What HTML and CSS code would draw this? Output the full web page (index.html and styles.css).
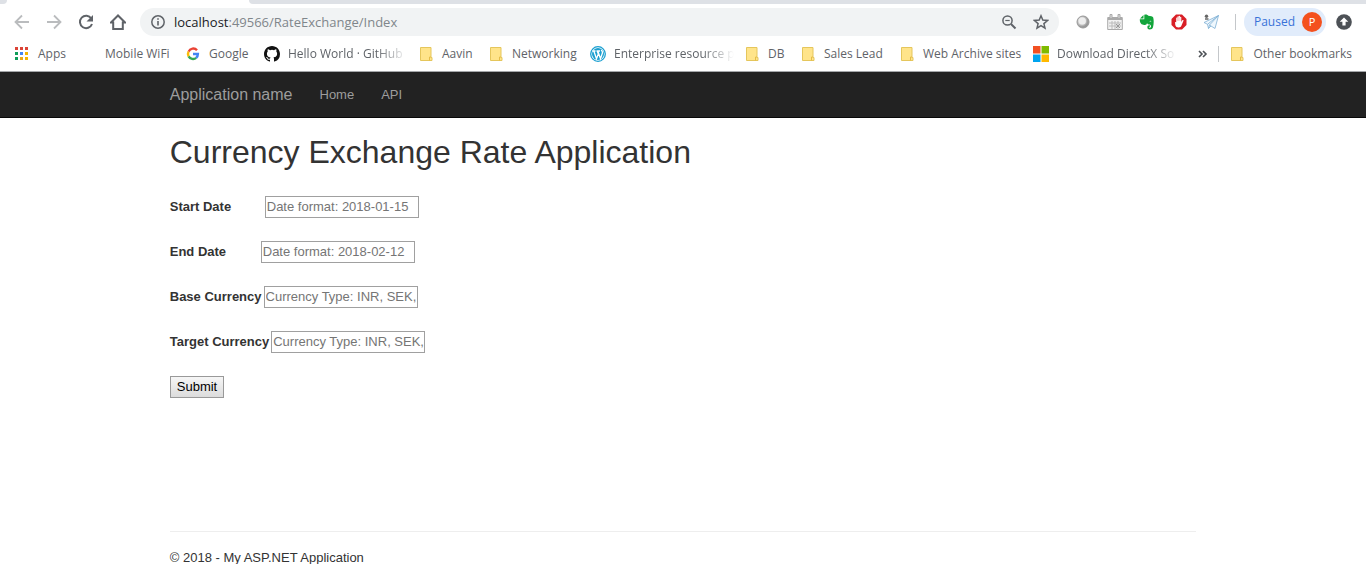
FILE: index.html
```
<!DOCTYPE html>
<html lang="en">
<head>
<meta charset="utf-8">
<title>Currency Exchange Rate Application</title>
<link rel="stylesheet" href="styles.css">
</head>
<body>
<svg class="defs" aria-hidden="true">
  <symbol id="folder" viewBox="0 0 16 16"><path d="M2.500 1.500h10.500v10h1v3H2.500z" fill="#ffe48a" stroke="#e5c65c"/><path d="M11.500 14.500v-3.500h1.500" fill="none" stroke="#e5bd48"/></symbol>
</svg>
<div class="browser">
  <div class="tabs"><div class="tab-edge"></div><div class="tab"></div><div class="tab-rest"></div></div>
  <div class="toolbar">
    <button class="tool" aria-label="Back"><svg viewBox="0 0 16 16"><path d="M15 8H2M8 1.500L1.500 8 8 14.500" fill="none" stroke="#babcbe" stroke-width="1.800"/></svg></button>
    <button class="tool" aria-label="Forward"><svg viewBox="0 0 16 16"><path d="M1 8h13M8 1.500L14.500 8 8 14.500" fill="none" stroke="#babcbe" stroke-width="1.800"/></svg></button>
    <button class="tool" aria-label="Reload"><svg viewBox="0 0 16 16"><path d="M13.300 4.500A6.200 6.200 0 1 0 14 10" fill="none" stroke="#5f6368" stroke-width="2"/><path d="M15 1v6.500H8.500z" fill="#5f6368"/></svg></button>
    <button class="tool" aria-label="Home page"><svg viewBox="0 0 16 16"><path d="M1 8.500L8 1.500l7 7h-2.200V15H3.200V8.500z" fill="none" stroke="#5f6368" stroke-width="2"/></svg></button>
    <div class="address">
      <svg viewBox="0 0 16 16" class="icon"><circle cx="8" cy="8" r="6.200" fill="none" stroke="#5f6368" stroke-width="1.500"/><path d="M8 7v4.500M8 4.200v1.600" stroke="#5f6368" stroke-width="1.600"/></svg>
      <span class="url"><span class="host">localhost</span>:49566/RateExchange/Index</span>
      <button class="addr-button" aria-label="Zoom"><svg viewBox="0 0 16 16" class="icon"><circle cx="6.500" cy="6.500" r="4.600" fill="none" stroke="#5f6368" stroke-width="1.500"/><path d="M10 10l4.500 4.500" stroke="#5f6368" stroke-width="2"/><path d="M4.300 6.500h4.400" stroke="#5f6368" stroke-width="1.200"/></svg></button>
      <button class="addr-button" aria-label="Bookmark"><svg viewBox="0 0 16 16" class="icon"><path d="M8 1.800l1.800 4.300 4.700.4-3.600 3.100 1.100 4.600L8 11.700l-4 2.500 1.100-4.600-3.600-3.100 4.700-.4z" fill="none" stroke="#5f6368" stroke-width="1.500"/></svg></button>
    </div>
    <div class="extensions">
      <svg viewBox="0 0 16 16" class="icon"><defs><radialGradient id="orb" cx=".4" cy=".4"><stop offset="0" stop-color="#fff"/><stop offset=".5" stop-color="#ddd"/><stop offset="1" stop-color="#999"/></radialGradient></defs><circle cx="8" cy="8" r="6" fill="url(#orb)" stroke="#999"/><circle cx="7.300" cy="7" r="3.600" fill="#eee"/></svg>
      <svg viewBox="0 0 16 16" class="icon"><path d="M.7 3.500h14.600v12H.7z" fill="#f1f1f1" stroke="#aaa"/><path d="M1 5h14" stroke="#aaa" stroke-width="2"/><path d="M3 .5h2v4H3zM11 .5h2v4h-2z" fill="#ddd" stroke="#aaa"/><path d="M2 9h12M2 12h12M5 7v8M8 7v8M11 7v8" stroke="#bbb"/><path d="M9 10l4 4M13 10l-4 4" stroke="#999"/></svg>
      <svg viewBox="0 0 16 16" class="icon"><path d="M1 4.500L4.500 1v3.500zM5.300.7c2-.8 3.400.1 4 1 2.200.1 4.500.4 4.900 1.800.8 3 .6 7-.2 9.800-.5 1.700-1.500 2.200-3.300 2.200-1.600 0-2.300-1-2.300-2.300 0-1.400.7-2.200 2.600-1.800v1.400c-.7-.1-1.100 0-1.100.5 0 .6 1.700.5 2 0 .3-.7 0-2.100-.8-2.500-1-.4-2-.2-2.500-.7l-.6-1c-.3 2-1.500 2.100-3.700 1.700C1.500 10.300.7 8 .8 5.300h4.500z" fill="#12a53b"/><path d="M10.500 7.500c.2-1 1.600-1 1.900.3-.6-.4-1.200-.5-1.900-.3" fill="#fff"/></svg>
      <svg viewBox="0 0 16 16" class="icon"><path d="M5 .5h6L15.500 5v6L11 15.500H5L.5 11V5z" fill="#d91f26"/><path d="M4 8l1.200.3V4.200c0-1 1.200-1 1.200 0V3c0-1 1.300-1 1.300 0v-.6c0-.9 1.300-.9 1.300 0v1c0-1 1.300-.9 1.300 0V8l1-1.700c.6-.8 1.500-.3 1.200.5l-2.100 5c-.4 1-1.300 1.700-2.700 1.700-1.900 0-3-.8-3.400-2.500z" fill="#fff"/><path d="M6.400 4v3M7.700 3v4M9 3.500v3.500" stroke="#e77" stroke-width=".4"/></svg>
      <svg viewBox="0 0 16 16" class="icon"><path d="M15.500 1.500L1 8.500l3.500 1.800L5.500 14.500 8 12l4 2.500zM15.500 1.500L6.500 11l-1 3.500M15.500 1.500l-11 8.800M6.500 11l1.500 1" fill="#eff7fd" stroke="#7fb0d4" stroke-width=".8"/><circle cx="3.500" cy="2.300" r="1.700" fill="#666"/><path d="M2 5h3.500" stroke="#666" stroke-width="1.500"/></svg>
    </div>
    <div class="divider"></div>
    <button class="profile">Paused <span class="avatar">P</span></button>
    <button class="tool update" aria-label="Update"><svg viewBox="0 0 16 16"><circle cx="8" cy="8" r="7.800" fill="#4d5156"/><path d="M8 3.500l4.300 4.300H9.600v3.700H6.400V7.800H3.700z" fill="#fff"/></svg></button>
  </div>
  <nav class="bookmarks" aria-label="Bookmarks">
    <div class="bookmark-list">
      <a href="#" class="bookmark"><svg viewBox="0 0 16 16" class="icon"><path d="M1 1h3v3H1zM6 1h3v3H6zM11 1h3v3h-3z" fill="#db4437"/><path d="M1 6h3v3H1z" fill="#0f9d58"/><path d="M6 6h3v3H6z" fill="#4285f4"/><path d="M11 6h3v3h-3zM11 11h3v3h-3z" fill="#f4b400"/><path d="M1 11h3v3H1z" fill="#0f9d58"/><path d="M6 11h3v3H6z" fill="#e9a91b"/></svg><span>Apps</span></a>
      <a href="#" class="bookmark"><span class="icon"></span><span>Mobile WiFi</span></a>
      <a href="#" class="bookmark"><svg viewBox="0 0 16 16" class="icon"><g fill="none" stroke-width="2.400"><path d="M12 4.300A5 5 0 0 0 3.600 5.600" stroke="#ea4335"/><path d="M3.600 5.600a5 5 0 0 0 0 4.800" stroke="#fbbc05"/><path d="M3.600 10.400a5 5 0 0 0 7.600 1.400" stroke="#34a853"/><path d="M11.200 11.800A5 5 0 0 0 12.900 8H8" stroke="#4285f4"/></g></svg><span>Google</span></a>
      <a href="#" class="bookmark"><svg viewBox="0 0 16 16" class="icon"><path fill="#111" d="M8 0C3.580 0 0 3.580 0 8c0 3.540 2.290 6.530 5.470 7.590.4.070.55-.17.55-.38 0-.19-.01-.82-.01-1.490-2.010.37-2.530-.49-2.690-.94-.09-.23-.48-.94-.82-1.130-.28-.15-.68-.52-.01-.53.63-.01 1.080.58 1.230.82.72 1.210 1.870.87 2.330.66.070-.52.28-.87.51-1.070-1.780-.2-3.640-.89-3.640-3.950 0-.87.31-1.590.82-2.150-.08-.2-.36-1.020.08-2.120 0 0 .67-.21 2.200.82a7.600 7.600 0 0 1 4 0c1.530-1.040 2.200-.82 2.200-.82.44 1.100.16 1.920.08 2.120.51.56.82 1.270.82 2.150 0 3.070-1.870 3.750-3.650 3.950.29.25.54.73.54 1.480 0 1.070-.01 1.930-.01 2.200 0 .21.15.46.55.38A8 8 0 0 0 16 8c0-4.420-3.580-8-8-8z"/></svg><span class="fade">Hello World · GitHub</span></a>
      <a href="#" class="bookmark"><svg class="icon"><use href="#folder"/></svg><span>Aavin</span></a>
      <a href="#" class="bookmark"><svg class="icon"><use href="#folder"/></svg><span>Networking</span></a>
      <a href="#" class="bookmark"><svg viewBox="0 0 16 16" class="icon"><circle cx="8" cy="8" r="7.300" fill="#fff" stroke="#1b9fd0" stroke-width="1.300"/><circle cx="8" cy="8" r="6" fill="#1b9fd0"/><path d="M2.500 5h3M6.500 5h3.500M3.800 5l2.700 7.800L8.300 8 7.200 5M8 5.500l2.500 7.300L12.400 7c.3-1.600-.8-2-1-3.200" fill="none" stroke="#fff" stroke-width="1.300"/></svg><span class="fade">Enterprise resource p</span></a>
      <a href="#" class="bookmark"><svg class="icon"><use href="#folder"/></svg><span>DB</span></a>
      <a href="#" class="bookmark"><svg class="icon"><use href="#folder"/></svg><span>Sales Lead</span></a>
      <a href="#" class="bookmark"><svg class="icon"><use href="#folder"/></svg><span>Web Archive sites</span></a>
      <a href="#" class="bookmark"><svg viewBox="0 0 16 16" class="icon"><path d="M0 0h7.500v7.500H0z" fill="#f25022"/><path d="M8.500 0H16v7.500H8.500z" fill="#7fba00"/><path d="M0 8.500h7.500V16H0z" fill="#00a4ef"/><path d="M8.500 8.500H16V16H8.500z" fill="#ffb900"/></svg><span class="fade">Download DirectX So</span></a>
    </div>
    <button class="more" aria-label="More bookmarks"><svg viewBox="0 0 10 8"><path d="M1 1l3 3-3 3M5 1l3 3-3 3" fill="none" stroke="#4d5156" stroke-width="1.600"/></svg></button>
    <div class="divider"></div>
    <a href="#" class="bookmark"><svg class="icon"><use href="#folder"/></svg><span>Other bookmarks</span></a>
  </nav>
</div>
<header class="navbar">
  <nav class="container nav-row">
    <a href="#" class="brand">Application name</a>
    <a href="#">Home</a>
    <a href="#">API</a>
  </nav>
</header>
<main class="container">
  <h2>Currency Exchange Rate Application</h2>
  <form>
    <div class="field"><label for="start" class="wide">Start Date</label><input id="start" type="text" placeholder="Date format: 2018-01-15"></div>
    <div class="field"><label for="end" class="medium">End Date</label><input id="end" type="text" placeholder="Date format: 2018-02-12"></div>
    <div class="field"><label for="base">Base Currency</label><input id="base" type="text" placeholder="Currency Type: INR, SEK,"></div>
    <div class="field"><label for="target">Target Currency</label><input id="target" type="text" placeholder="Currency Type: INR, SEK,"></div>
    <button type="submit" class="submit">Submit</button>
  </form>
  <footer>© 2018 - My ASP.NET Application</footer>
</main>
</body>
</html>
```
FILE: styles.css
```
* { box-sizing: border-box; }
body {
  margin: 0;
  background: #fff;
  color: #333;
  font: 13px/18px "Liberation Sans", Arial, sans-serif;
  overflow: hidden;
}
a { text-decoration: none; color: inherit; }
button { font: inherit; cursor: pointer; }
.defs { display: block; width: 0; height: 0; }
.icon { width: 16px; height: 16px; flex: none; }

.browser {
  font-family: "Open Sans", "Noto Sans", sans-serif;
  color: #5f6368;
  border-bottom: 1px solid #a5a7aa;
}
.tabs { display: flex; height: 4px; background: #fff; }
.tab-edge { width: 7px; background: #dee1e6; border-bottom-right-radius: 4px; }
.tab { width: 242px; }
.tab-rest { flex: 1; background: #dee1e6; border-bottom-left-radius: 4px; }
.toolbar {
  display: flex;
  align-items: center;
  height: 36px;
  padding: 0 14px;
}
.tool {
  width: 16px;
  height: 16px;
  margin-right: 16px;
  padding: 0;
  border: 0;
  background: none;
  flex: none;
}
.tool svg { display: block; width: 16px; height: 16px; }
.address {
  display: flex;
  align-items: center;
  flex: 1;
  height: 28px;
  margin-left: -2px;
  padding: 0 10px;
  border-radius: 14px;
  background: #f1f3f4;
  font-size: 13px;
}
.url { flex: 1; margin-left: 8px; color: #80868b; }
.host { color: #202124; }
.addr-button {
  height: 16px;
  margin-left: 16px;
  padding: 0;
  border: 0;
  background: none;
}
.addr-button svg { display: block; }
.extensions { display: flex; gap: 16px; margin: 0 16px; }
.divider { width: 1px; height: 16px; background: #c4c7ca; }
.profile {
  display: flex;
  align-items: center;
  gap: 7px;
  height: 28px;
  margin: 0 10px 0 8px;
  padding: 0 4px 0 10px;
  border: 0;
  border-radius: 14px;
  background: #e1ecfb;
  color: #3972d8;
  font-size: 12px;
}
.avatar {
  width: 20px;
  height: 20px;
  border-radius: 50%;
  background: #f4511e;
  color: #fff;
  font-size: 11px;
  line-height: 20px;
  text-align: center;
}
.update { margin: 0; }
.bookmarks {
  display: flex;
  align-items: center;
  height: 31px;
  padding: 0 14px 3px;
  font-size: 12px;
}
.bookmarks .divider { margin: 0 10px; }
.bookmark-list {
  display: grid;
  grid-template-columns: 67px 104px 79px 154px 70px 102px 154px 56px 99px 134px 144px;
}
.bookmark {
  display: flex;
  align-items: center;
  gap: 8px;
  min-width: 0;
  white-space: nowrap;
}
.fade { mask-image: linear-gradient(to right, #000 88px, transparent 120px); }
.more { margin-left: auto; padding: 0; border: 0; background: none; }
.more svg { display: block; width: 10px; height: 8px; }

.container { width: calc(75% + 2px); min-width: 600px; margin: 0 auto; }
.navbar { background: #222; border-bottom: 1px solid #080808; color: #9d9d9d; }
.nav-row { display: flex; align-items: center; gap: 27px; height: 45px; }
.brand { font-size: 16px; line-height: 20px; }

h2 { margin: 16px 0 26px; font-size: 32px; line-height: 36px; font-weight: 400; }
.field { display: flex; align-items: center; gap: 2px; height: 22px; margin-bottom: 23px; }
.field label { font-weight: 700; }
.wide { width: 93px; }
.medium { width: 89px; }
.field input {
  width: 154px;
  height: 22px;
  padding: 0 0 2px 1px;
  border: 1px solid #a0a0a0;
  border-radius: 0;
  background: #fff;
  color: #333;
  font: inherit;
}
.field input::placeholder { color: #757575; }
.submit {
  display: block;
  height: 22px;
  padding: 0 6px;
  border: 1px solid #999;
  border-radius: 0;
  background: linear-gradient(#f6f6f6, #dcdcdc);
  color: #000;
  line-height: 18px;
}
footer { margin-top: 133px; padding-top: 17px; border-top: 1px solid #eee; }
```
